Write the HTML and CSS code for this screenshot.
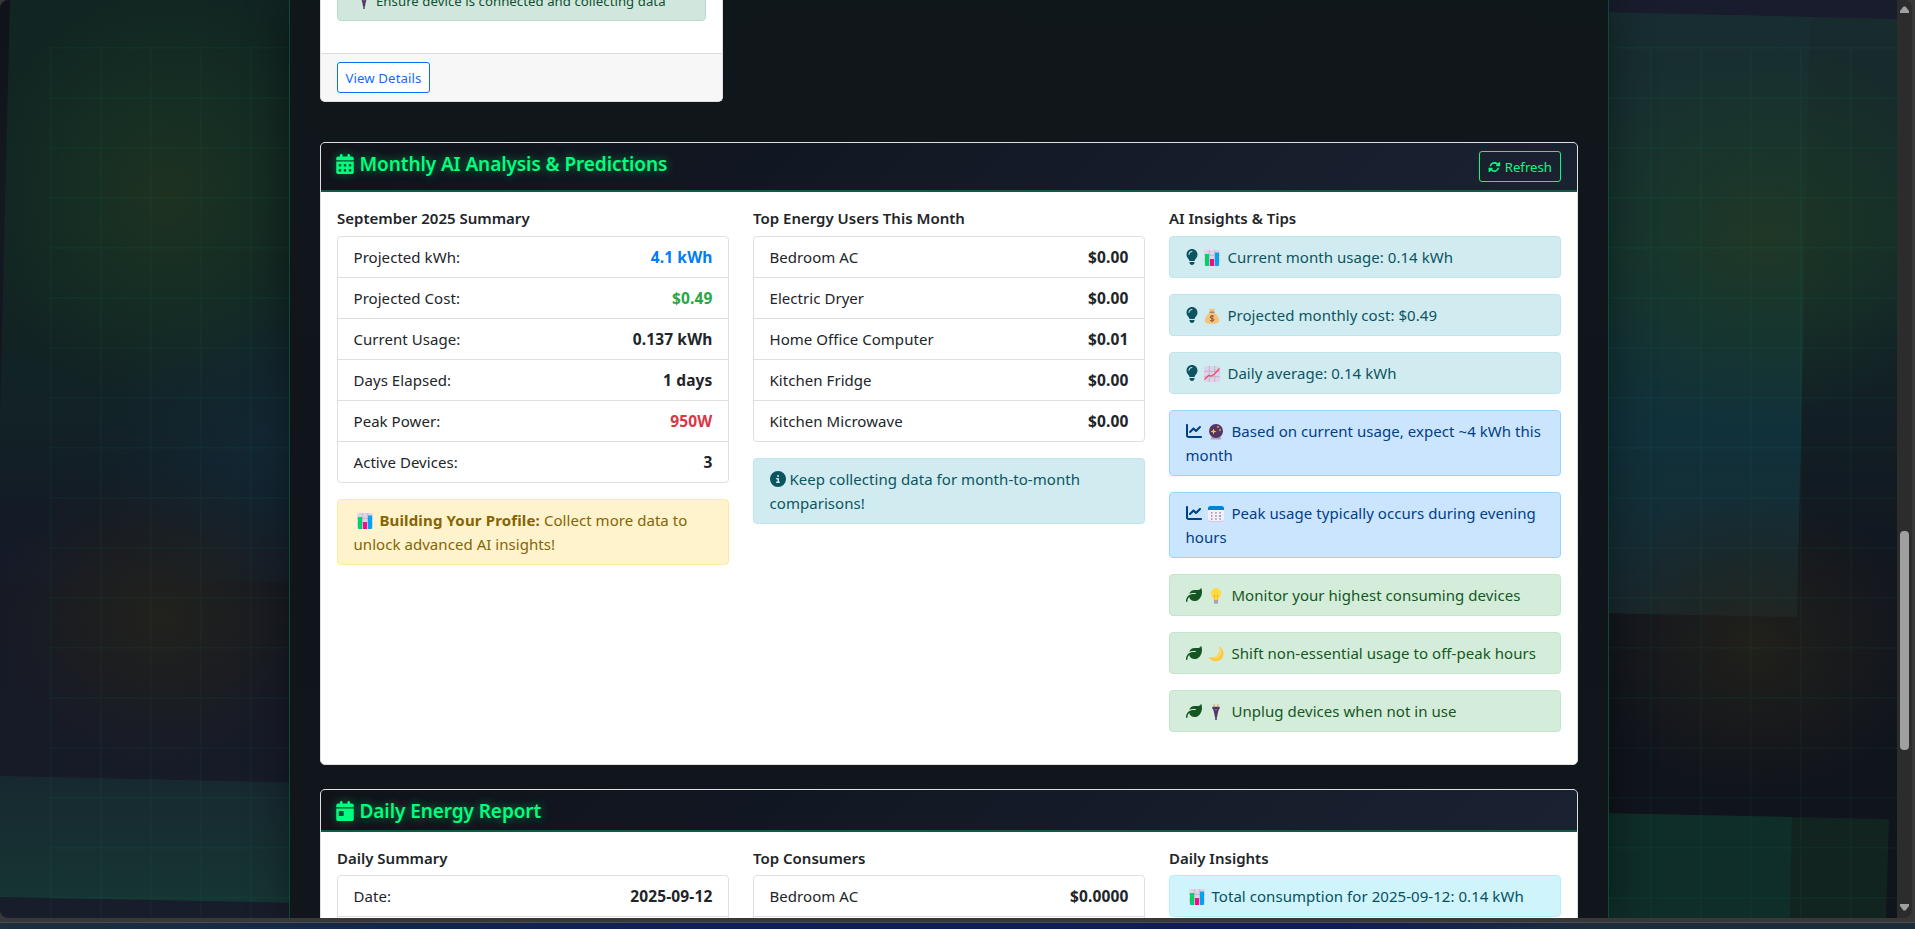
FILE: index.html
```html
<!DOCTYPE html>
<html lang="en">
<head>
    <meta charset="UTF-8">
    <meta name="viewport" content="width=device-width, initial-scale=1.0">
    <title>Energy Dashboard</title>
    <link rel="stylesheet" href="styles.css">
</head>
<body>
    <!-- icon set -->
    <svg class="defs" width="0" height="0">
        <symbol id="calendar-days" viewBox="0 0 448 512"><path d="M128 0c17.700 0 32 14.300 32 32V64H288V32c0-17.700 14.300-32 32-32s32 14.300 32 32V64h48c26.500 0 48 21.500 48 48v48H0V112C0 85.500 21.500 64 48 64H96V32c0-17.700 14.300-32 32-32zM0 192H448V464c0 26.500-21.500 48-48 48H48c-26.500 0-48-21.500-48-48V192zm64 80v32c0 8.800 7.200 16 16 16h32c8.800 0 16-7.200 16-16V272c0-8.800-7.200-16-16-16H80c-8.800 0-16 7.200-16 16zm128 0v32c0 8.800 7.200 16 16 16h32c8.800 0 16-7.200 16-16V272c0-8.800-7.200-16-16-16H208c-8.800 0-16 7.200-16 16zm144-16c-8.800 0-16 7.200-16 16v32c0 8.800 7.200 16 16 16h32c8.800 0 16-7.200 16-16V272c0-8.800-7.200-16-16-16H336zM64 400v32c0 8.800 7.200 16 16 16h32c8.800 0 16-7.200 16-16V400c0-8.800-7.200-16-16-16H80c-8.800 0-16 7.200-16 16zm144-16c-8.800 0-16 7.200-16 16v32c0 8.800 7.200 16 16 16h32c8.800 0 16-7.200 16-16V400c0-8.800-7.200-16-16-16H208zm112 16v32c0 8.800 7.200 16 16 16h32c8.800 0 16-7.200 16-16V400c0-8.800-7.200-16-16-16H336c-8.800 0-16 7.200-16 16z"/></symbol>
        <symbol id="calendar-day" viewBox="0 0 448 512"><path d="M128 0c17.700 0 32 14.300 32 32V64H288V32c0-17.700 14.300-32 32-32s32 14.300 32 32V64h48c26.500 0 48 21.500 48 48v48H0V112C0 85.500 21.500 64 48 64H96V32c0-17.700 14.300-32 32-32zM0 192H448V464c0 26.500-21.500 48-48 48H48c-26.500 0-48-21.500-48-48V192zm80 64c-8.800 0-16 7.200-16 16v96c0 8.800 7.200 16 16 16h96c8.800 0 16-7.200 16-16V272c0-8.800-7.200-16-16-16H80z"/></symbol>
        <symbol id="sync" viewBox="0 0 512 512"><path d="M60 225A200 200 0 0 1 395 115L440 70Q455 55 474 62Q490 68 490 88V225H353Q333 225 327 209Q320 190 335 175L350 160A137 137 0 0 0 122 225z"/><path d="M452 287A200 200 0 0 1 117 397L72 442Q57 457 38 450Q22 444 22 424V287H159Q179 287 185 303Q192 322 177 337L162 352A137 137 0 0 0 390 287z"/></symbol>
        <symbol id="info" viewBox="0 0 512 512"><path d="M256 512A256 256 0 1 0 256 0a256 256 0 1 0 0 512zM216 336h24V272H216c-13.300 0-24-10.700-24-24s10.700-24 24-24h48c13.300 0 24 10.700 24 24v88h8c13.300 0 24 10.700 24 24s-10.700 24-24 24H216c-13.300 0-24-10.700-24-24s10.700-24 24-24zm40-208a32 32 0 1 1 0 64 32 32 0 1 1 0-64z"/></symbol>
        <symbol id="bulb" viewBox="0 0 384 512"><path d="M272 384c9.600-31.900 29.500-59.100 49.200-86.200c5.200-7.100 10.400-14.200 15.400-21.400c19.800-28.500 31.400-63 31.400-100.300C368 78.800 289.200 0 192 0S16 78.800 16 176c0 37.300 11.600 71.900 31.400 100.300c5 7.200 10.200 14.300 15.400 21.400c19.800 27.100 39.700 54.400 49.200 86.200H272zM192 512c44.200 0 80-35.800 80-80V416H112v16c0 44.200 35.800 80 80 80zM112 176c0 8.800-7.200 16-16 16s-16-7.200-16-16c0-61.900 50.100-112 112-112c8.800 0 16 7.200 16 16s-7.200 16-16 16c-44.200 0-80 35.800-80 80z"/></symbol>
        <symbol id="chart-line" viewBox="0 0 512 512"><path d="M64 64c0-17.700-14.300-32-32-32S0 46.300 0 64V400c0 44.200 35.800 80 80 80H480c17.700 0 32-14.300 32-32s-14.300-32-32-32H80c-8.800 0-16-7.200-16-16V64zm406.600 86.600c12.500-12.500 12.500-32.800 0-45.300s-32.800-12.500-45.300 0L320 210.700l-57.400-57.400c-12.500-12.500-32.800-12.500-45.300 0l-112 112c-12.500 12.500-12.500 32.800 0 45.300s32.800 12.500 45.300 0L240 221.300l57.400 57.400c12.500 12.500 32.800 12.500 45.300 0l128-128z"/></symbol>
        <symbol id="leaf" viewBox="0 0 512 512"><path d="M272 96c-78.600 0-145.100 51.500-167.700 122.500c33.600-17 71.500-26.500 111.700-26.500h88c8.800 0 16 7.200 16 16s-7.200 16-16 16H216c-16.600 0-32.700 1.900-48.300 5.400c-25.900 5.900-49.900 16.400-71.400 30.700C38.300 298.800 0 364.900 0 440v16c0 13.300 10.700 24 24 24s24-10.700 24-24V440c0-48.700 20.700-92.500 53.800-123.200C121.600 392.300 190.300 448 272 448l1 0c132.100-.7 239-130.900 239-291.400c0-42.600-7.500-83.100-21.100-119.600c-2.600-6.900-12.700-6.600-16.200-.1C455.900 72.100 418.700 96 376 96L272 96z"/></symbol>

        <symbol id="e-bars" viewBox="0 0 16 16"><rect width="16" height="16" rx="2" fill="#dfd3ea"/><path d="M5.300 0v16M10.700 0v16M0 5.300h16M0 10.700h16" stroke="#b6abc4" stroke-width=".7"/><path d="M1 4h4v12H2a1 1 0 0 1-1-1z" fill="#00d26a"/><path d="M6 9h4v7H6z" fill="#f70a8d"/><path d="M11 2.500h4V15a1 1 0 0 1-1 1h-3z" fill="#00a6ed"/></symbol>
        <symbol id="e-money" viewBox="0 0 16 16"><path d="M5 1l1-.5 2 .8 2-.8 1 .5-1.500 3h-3z" fill="#f3c07b"/><path d="M5.500 5C3 7 1 9.500 1 12c0 2.500 1.500 3.700 4 3.700h6c2.500 0 4-1.200 4-3.700 0-2.500-2-5-4.500-7z" fill="#f9c173"/><path d="M5.500 4.200h5" stroke="#8c5543"/><path d="M10 8.500c-.7-1-3.800-1-3.800.6 0 1.700 3.800.9 3.800 2.700 0 1.600-3.300 1.600-4 .3M8 7v7" fill="none" stroke="#7d4533" stroke-width=".9"/></symbol>
        <symbol id="e-trend" viewBox="0 0 16 16"><rect width="16" height="16" rx="2" fill="#dfd3ea"/><path d="M5.300 0v16M10.700 0v16M0 5.300h16M0 10.700h16" stroke="#b6abc4" stroke-width=".7"/><path d="M.5 13.500l4-4L7.500 10l3-2L15.500 2.500" fill="none" stroke="#f8406a" stroke-width="1.200"/></symbol>
        <symbol id="e-crystal" viewBox="0 0 16 16"><path d="M3.500 12h9l.8 3.500H2.700z" fill="#b4a4c4"/><circle cx="8" cy="7" r="7" fill="#533566"/><path d="M5.500 4.500l.8 2.200 2.200.8-2.200.8-.8 2.200-.8-2.200-2.200-.8 2.200-.8zM10 1.500l.4 1.100 1.100.4-1.100.4-.4 1.100-.4-1.100-1.100-.4 1.100-.4zM12 4.500l.4 1.100 1 .4-1 .4-.4 1-.4-1-1-.4 1-.4z" fill="#ffc83d"/></symbol>
        <symbol id="e-cal" viewBox="0 0 16 16"><rect width="16" height="16" rx="2.500" fill="#d3c5e3"/><path d="M0 4h16v9a2 2 0 0 1-2 2H2a2 2 0 0 1-2-2z" fill="#f3eef8"/><path d="M0 4V2.500A2.500 2.500 0 0 1 2.500 0h11A2.500 2.500 0 0 1 16 2.500V4z" fill="#0084ce"/><path d="M3 6.800h1.500M7.200 6.800h1.500M3 10h1.500M7.200 10h1.500M3 13h1.500M7.200 13h1.500M11.300 6.800h1.500M11.300 13h1.500" stroke="#998ea4" stroke-width="1.400"/><path d="M11.300 10h1.500" stroke="#0084ce" stroke-width="1.600"/></symbol>
        <symbol id="e-bulb" viewBox="0 0 16 16"><path d="M8 0a5 5 0 0 0-5 5.200c0 3 2.500 4 2.800 7.300h4.400C10.500 9.200 13 8.200 13 5.200A5 5 0 0 0 8 0z" fill="#ffdb3d"/><path d="M6.800 12L6 7l2 1 2-1-.8 5" fill="none" stroke="#f5b52a" stroke-width=".8"/><path d="M5.900 12h4.200v2.700a1 1 0 0 1-1 1.100H6.900a1 1 0 0 1-1-1.100z" fill="#a9a4b3"/></symbol>
        <symbol id="e-moon" viewBox="0 0 16 16"><path d="M11 .5c3 1.500 4.700 4.200 4.500 7.500C15.200 12.300 12 15.200 8 15.200c-3.500 0-6.300-1.700-7.500-4.200 3 1 6.500.5 8.700-1.800C11.500 6.800 12.300 3.500 11 .5z" fill="#ffc83d"/><path d="M12 3c1.500 4-1 8-5 9.300" fill="none" stroke="#ffdc75" stroke-width="1.500"/></symbol>
        <symbol id="e-plug" viewBox="0 0 16 16"><path d="M5.700 0h1v4h-1zM9.300 0h1v4h-1z" fill="#f0a05a"/><path d="M4.300 2.800h7.400v1.700l-1 1.300L9.600 10l-.3 2.500-.5.500v3H7.200v-3l-.5-.5-.3-2.500-1.100-4.200-1-1.300z" fill="#533566"/><path d="M7 5h2l-.6 2h-.8z" fill="#8a68a3"/></symbol>
    </svg>

    <div class="viewport">
        <!-- soft backdrop behind the dashboard -->
        <svg class="backdrop" viewBox="0 0 1897 918">
            <defs>
                <linearGradient id="base" x1="0" y1="0" x2="0" y2="1"><stop offset="0" stop-color="#10131b"/><stop offset="1" stop-color="#181d2b"/></linearGradient>
                <linearGradient id="baseRight" x1="0" y1="0" x2="0" y2="1"><stop offset="0" stop-color="#181c2c"/><stop offset=".85" stop-color="#10141c"/></linearGradient>
                <linearGradient id="leftPanel" x1="0" y1="0" x2="0" y2="1"><stop offset="0" stop-color="#112522"/><stop offset=".45" stop-color="#112422"/><stop offset=".72" stop-color="#122226"/><stop offset=".88" stop-color="#131b26"/><stop offset="1" stop-color="#151a28"/></linearGradient>
                <linearGradient id="rightPanel" x1="0" y1="0" x2="0" y2="1"><stop offset="0" stop-color="#182d31"/><stop offset=".4" stop-color="#163432"/><stop offset=".7" stop-color="#11333d"/><stop offset="1" stop-color="#182b32"/></linearGradient>
                <linearGradient id="rightSide" x1="0" y1="0" x2="0" y2="1"><stop offset="0" stop-color="#182b2e"/><stop offset=".4" stop-color="#152c29"/><stop offset=".6" stop-color="#122227"/><stop offset="1" stop-color="#12161f"/></linearGradient>
                <linearGradient id="band" x1="0" y1="0" x2="0" y2="1"><stop offset="0" stop-color="#172930"/><stop offset="1" stop-color="#163533"/></linearGradient>
                <radialGradient id="green"><stop offset="0" stop-color="#26391f" stop-opacity=".65"/><stop offset=".5" stop-color="#1b3b25" stop-opacity=".4"/><stop offset="1" stop-color="#1b3b25" stop-opacity="0"/></radialGradient>
                <radialGradient id="amber"><stop offset="0" stop-color="#272618" stop-opacity=".7"/><stop offset=".5" stop-color="#242219" stop-opacity=".4"/><stop offset="1" stop-color="#242219" stop-opacity="0"/></radialGradient>
                <radialGradient id="blue"><stop offset="0" stop-color="#132a38" stop-opacity=".8"/><stop offset="1" stop-color="#132a38" stop-opacity="0"/></radialGradient>
                <pattern id="grid" width="50" height="50" patternUnits="userSpaceOnUse" y="47"><path d="M0 .5h50M.5 0v50" stroke="#00ff88" stroke-opacity=".035" stroke-width="2"/></pattern>
                <clipPath id="blueClip"><path d="M0 0H320V583L200 581H0z"/></clipPath>
            </defs>
            <rect width="950" height="918" fill="url(#base)"/>
            <rect x="950" width="947" height="918" fill="url(#baseRight)"/>
            <path d="M10 0H400V583H0V420z" fill="url(#leftPanel)"/>
            <ellipse cx="290" cy="450" rx="200" ry="190" fill="url(#blue)" clip-path="url(#blueClip)"/>
            <ellipse cx="165" cy="195" rx="190" ry="210" fill="url(#green)"/>
            <ellipse cx="160" cy="615" rx="170" ry="150" fill="url(#amber)"/>
            <path d="M0 776L400 785V905L0 897z" fill="url(#band)"/>
            <path d="M1500 10L1897 19V580H1500z" fill="url(#rightSide)"/>
            <path d="M1500 10L1810 17L1797 617L1500 611z" fill="url(#rightPanel)" opacity=".9"/>
            <ellipse cx="1760" cy="235" rx="200" ry="190" fill="url(#green)"/>
            <ellipse cx="1755" cy="645" rx="170" ry="150" fill="url(#amber)"/>
            <path d="M1500 811L1889 819L1886 918H1500z" fill="#11241f"/>
            <path d="M1500 811L1792 817L1790 918H1500z" fill="#0f2d29"/>
            <rect x="49" y="46" width="1848" height="872" fill="url(#grid)"/>
        </svg>

        <main class="container">
            <div class="card device-card">
                <div class="device-body">
                    <div class="alert alert-sm"><svg class="emoji"><use href="#e-plug"/></svg> Ensure device is connected and collecting data</div>
                </div>
                <div class="card-footer"><button class="btn btn-blue">View Details</button></div>
            </div>

            <section class="card">
                <div class="card-header">
                    <h5><svg class="icon"><use href="#calendar-days"/></svg>Monthly AI Analysis &amp; Predictions</h5>
                    <button class="btn btn-green"><svg class="icon"><use href="#sync"/></svg>Refresh</button>
                </div>
                <div class="card-body">
                    <div class="col">
                        <h6>September 2025 Summary</h6>
                        <ul class="list-group">
                            <li><span>Projected kWh:</span><b class="text-primary">4.1 kWh</b></li>
                            <li><span>Projected Cost:</span><b class="text-success">$0.49</b></li>
                            <li><span>Current Usage:</span><b>0.137 kWh</b></li>
                            <li><span>Days Elapsed:</span><b>1 days</b></li>
                            <li><span>Peak Power:</span><b class="text-danger">950W</b></li>
                            <li><span>Active Devices:</span><b>3</b></li>
                        </ul>
                        <div class="alert alert-warning"><svg class="emoji"><use href="#e-bars"/></svg> <strong>Building Your Profile:</strong> Collect more data to<br>unlock advanced AI insights!</div>
                    </div>
                    <div class="col">
                        <h6>Top Energy Users This Month</h6>
                        <ul class="list-group">
                            <li><span>Bedroom AC</span><b>$0.00</b></li>
                            <li><span>Electric Dryer</span><b>$0.00</b></li>
                            <li><span>Home Office Computer</span><b>$0.01</b></li>
                            <li><span>Kitchen Fridge</span><b>$0.00</b></li>
                            <li><span>Kitchen Microwave</span><b>$0.00</b></li>
                        </ul>
                        <div class="alert alert-info"><svg class="icon"><use href="#info"/></svg> Keep collecting data for month-to-month<br>comparisons!</div>
                    </div>
                    <div class="col">
                        <h6>AI Insights &amp; Tips</h6>
                        <div class="alert alert-info"><svg class="icon icon-bulb"><use href="#bulb"/></svg> <svg class="emoji"><use href="#e-bars"/></svg> Current month usage: 0.14 kWh</div>
                        <div class="alert alert-info"><svg class="icon icon-bulb"><use href="#bulb"/></svg> <svg class="emoji"><use href="#e-money"/></svg> Projected monthly cost: $0.49</div>
                        <div class="alert alert-info"><svg class="icon icon-bulb"><use href="#bulb"/></svg> <svg class="emoji"><use href="#e-trend"/></svg> Daily average: 0.14 kWh</div>
                        <div class="alert alert-primary"><svg class="icon"><use href="#chart-line"/></svg> <svg class="emoji"><use href="#e-crystal"/></svg> Based on current usage, expect ~4 kWh this<br>month</div>
                        <div class="alert alert-primary"><svg class="icon"><use href="#chart-line"/></svg> <svg class="emoji"><use href="#e-cal"/></svg> Peak usage typically occurs during evening<br>hours</div>
                        <div class="alert alert-success"><svg class="icon"><use href="#leaf"/></svg> <svg class="emoji"><use href="#e-bulb"/></svg> Monitor your highest consuming devices</div>
                        <div class="alert alert-success"><svg class="icon"><use href="#leaf"/></svg> <svg class="emoji"><use href="#e-moon"/></svg> Shift non-essential usage to off-peak hours</div>
                        <div class="alert alert-success"><svg class="icon"><use href="#leaf"/></svg> <svg class="emoji"><use href="#e-plug"/></svg> Unplug devices when not in use</div>
                    </div>
                </div>
            </section>

            <section class="card">
                <div class="card-header">
                    <h5><svg class="icon"><use href="#calendar-day"/></svg>Daily Energy Report</h5>
                </div>
                <div class="card-body">
                    <div class="col">
                        <h6>Daily Summary</h6>
                        <ul class="list-group">
                            <li><span>Date:</span><b>2025-09-12</b></li>
                            <li></li>
                        </ul>
                    </div>
                    <div class="col">
                        <h6>Top Consumers</h6>
                        <ul class="list-group">
                            <li><span>Bedroom AC</span><b>$0.0000</b></li>
                            <li></li>
                        </ul>
                    </div>
                    <div class="col">
                        <h6>Daily Insights</h6>
                        <div class="alert alert-cyan"><svg class="emoji"><use href="#e-bars"/></svg> Total consumption for 2025-09-12: 0.14 kWh</div>
                    </div>
                </div>
            </section>
        </main>

        <div class="scrollbar">
            <svg width="9" height="7" viewBox="0 0 9 7"><path d="M3.500 .5h2L9 5v2H0V5z"/></svg>
            <div class="thumb"></div>
            <svg width="9" height="7" viewBox="0 0 9 7"><path d="M0 0h9v2L5.500 6.500h-2L0 2z"/></svg>
        </div>
    </div>
    <div class="taskbar"></div>
</body>
</html>
```
FILE: styles.css
```css
* {
    box-sizing: border-box;
}

body {
    margin: 0;
    height: 929px;
    overflow: hidden;
    display: flex;
    flex-direction: column;
    background: #383838;
    color: #212529;
    font-family: "Noto Sans", "Open Sans", sans-serif;
    font-size: 15px;
    letter-spacing: 0.05px;
    line-height: 24px;
}

.defs {
    position: absolute;
}

.viewport {
    position: relative;
    width: 1912px;
    height: 918px;
    overflow: hidden;
    display: flex;
    border-radius: 8px;
}

.backdrop {
    position: absolute;
    left: 0;
    top: 0;
    width: 1897px;
    height: 918px;
}

.container {
    position: relative;
    width: 1320px;
    height: 918px;
    margin-left: 289px;
    margin-right: 288px;
    padding: 0 30px;
    overflow: clip;
    overflow-clip-margin: 60px;
    border: solid #0c4a36;
    border-width: 0 1px;
    background: linear-gradient(180deg, #10171b, #10151c 50%, #11161d);
    box-shadow: 0 0 40px rgba(0, 0, 0, 0.4);
}

.card {
    background: #fff;
    border: 1px solid #dfdfdf;
    border-radius: 5px;
    margin-bottom: 24px;
    overflow: hidden;
}

.device-card {
    width: 403px;
    height: 102px;
    margin-bottom: 40.4px;
    border-top: 0;
    border-radius: 0 0 5px 5px;
    display: flex;
    flex-direction: column;
    justify-content: flex-end;
}

.device-body {
    padding: 0 16px 32px;
}

.card-footer {
    height: 48px;
    padding: 8px 16px;
    background: #f7f7f7;
    border-top: 1px solid #dcdcdc;
}

.card-header {
    display: flex;
    justify-content: space-between;
    align-items: flex-start;
    padding: 8px 16px;
    border-bottom: 2px solid #0d5c43;
    background: linear-gradient(135deg, #10131a, #111722 35%, #1a2232);
}

h5 {
    display: flex;
    align-items: center;
    gap: 5.5px;
    margin: 0;
    padding-top: 2px;
    font-size: 19px;
    font-weight: 600;
    letter-spacing: -0.08px;
    line-height: 22px;
    color: #00ff7f;
    text-shadow: 0 0 10px rgba(0, 255, 127, 0.5);
}

h5 .icon {
    width: 18px;
    height: 20px;
    margin-left: -1px;
    filter: drop-shadow(0 0 5px rgba(0, 255, 127, 0.4));
}

h6 {
    margin: 0 0 7px;
    padding-top: 1px;
    font-size: 15px;
    font-weight: 600;
    letter-spacing: 0;
    line-height: 19.2px;
}

.card-body {
    display: grid;
    grid-template-columns: repeat(3, 1fr);
    gap: 24px;
    padding: 16px;
}

.list-group {
    list-style: none;
    margin: 0 0 16px;
    padding: 0;
    border: 1px solid #dfdfdf;
    border-radius: 4px;
}

.list-group li {
    display: flex;
    justify-content: space-between;
    height: 41px;
    padding: 8px 16px 8px 15.500px;
    border-bottom: 1px solid #dfdfdf;
}

.list-group li:last-child {
    height: 40px;
    border-bottom: 0;
}

.list-group + .alert {
    margin-bottom: 0;
}

.list-group b {
    font-size: 15.5px;
    letter-spacing: 0.15px;
    margin-right: -0.5px;
}

.text-primary {
    color: #007bff;
}

.text-success {
    color: #28a745;
}

.text-danger {
    color: #dc3545;
}

.alert {
    padding: 8px 16px 8px 15.500px;
    margin-bottom: 16px;
    border: 1px solid;
    border-radius: 4px;
    white-space: nowrap;
}

.alert-info {
    color: #0c5460;
    background: #d1ecf1;
    border-color: #bee5eb;
}

.alert-primary {
    color: #004085;
    background: #cce5ff;
    border-color: #99d3ff;
}

.alert-success {
    color: #155724;
    background: #d4edda;
    border-color: #c3e6cb;
}

.alert-warning {
    color: #856404;
    background: #fff3cd;
    border-color: #ffe8a1;
}

.alert-warning strong {
    letter-spacing: 0.15px;
}

.alert-cyan {
    color: #055160;
    background: #cff4fc;
    border-color: #b6effb;
}

.alert-sm {
    margin: 0;
    font-size: 13.2px;
    line-height: 21px;
    color: #0f5132;
    background: #d1e7dd;
    border-color: #badbcc;
}

.icon {
    width: 16px;
    height: 16px;
    fill: currentColor;
    vertical-align: -2px;
}

.icon-bulb {
    width: 12px;
}

.emoji {
    width: 16px;
    height: 16px;
    margin: 0 3px;
    vertical-align: -3px;
}

.alert-sm .emoji {
    width: 14px;
    height: 14px;
    margin: 0 2px 0 3px;
}

.btn {
    display: flex;
    align-items: center;
    height: 31px;
    border: 1px solid;
    border-radius: 3px;
    background: none;
    font: 13.2px "Noto Sans", "Open Sans", sans-serif;
}

.btn-blue {
    width: 93px;
    justify-content: center;
    padding: 0;
    color: #0d6efd;
    background: #fff;
    letter-spacing: 0.1px;
}

.btn-green {
    width: 82px;
    padding: 0 8px;
    gap: 4px;
    color: #00ff7f;
}

.btn-green .icon {
    width: 14px;
    height: 14px;
}

.scrollbar {
    position: relative;
    width: 15px;
    height: 918px;
    padding: 6px 3px 7px;
    display: flex;
    flex-direction: column;
    justify-content: space-between;
    background: #2c2c2c;
    fill: #9f9f9f;
}

.thumb {
    width: 9px;
    height: 219px;
    margin-top: 518px;
    margin-bottom: auto;
    border-radius: 4px;
    background: #9f9f9f;
}

.taskbar {
    height: 7px;
    margin-top: 4px;
    border-top: 1px solid #4a4f55;
    background: linear-gradient(90deg, #1c2f3c, #12264a 22%, #101f57 35%, #101c55 70%, #1c2c3b 83%, #1d2b38);
}
```
